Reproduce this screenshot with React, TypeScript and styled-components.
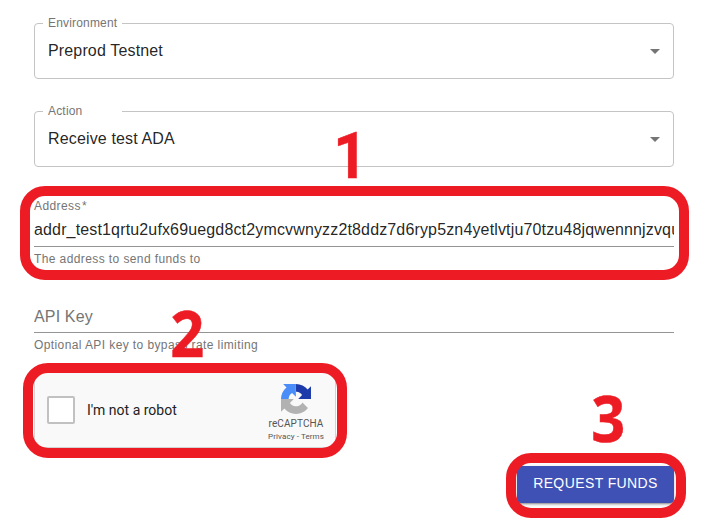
import React from "react";
import styled, { createGlobalStyle } from "styled-components";

const Global = createGlobalStyle`
  *, *::before, *::after { box-sizing: border-box; }
  body { margin: 0; background: #fff; overflow: hidden; }
`;

const Page = styled.main`
  position: relative;
  width: 713px;
  height: 524px;
  padding: 17px 39px 0 34px;
  overflow: hidden;
  font-family: "Liberation Sans", Arial, sans-serif;
  font-size: 16px;
  letter-spacing: 0.15px;
  color: rgba(0, 0, 0, 0.87);
`;

const Form = styled.form`
  display: flex;
  flex-direction: column;
`;

const Outlined = styled.fieldset`
  display: flex;
  flex-direction: column;
  height: 62px;
  min-width: 0;
  margin: 0 0 26px;
  padding: 0 13px 0 8px;
  border: 1px solid #c4c4c4;
  border-radius: 4px;
`;

const Legend = styled.legend`
  width: 79px;
  height: 12px;
  padding: 0 5px;
  font-size: 12px;
  line-height: 12px;
  letter-spacing: 0.18px;
  color: #757575;
`;

const SelectRow = styled.div`
  display: flex;
  align-items: center;
  justify-content: space-between;
  height: 43px;
  padding-left: 5px;
`;

const Arrow = styled.svg`
  width: 10px;
  height: 5px;
  margin-top: 2px;
  fill: #757575;
`;

const Field = styled.div<{ $gap: number }>`
  display: flex;
  flex-direction: column;
  margin-bottom: ${(p) => p.$gap}px;
`;

const FieldLabel = styled.label`
  height: 14px;
  margin-top: 6px;
  font-size: 12px;
  line-height: 14px;
  letter-spacing: 0.4px;
  word-spacing: -2.5px;
  color: #757575;
`;

const FieldValue = styled.div<{ $muted?: boolean }>`
  height: 34px;
  line-height: ${(p) => (p.$muted ? 35 : 33)}px;
  overflow: hidden;
  white-space: nowrap;
  color: ${(p) => (p.$muted ? "#757575" : "rgba(0,0,0,0.87)")};
  border-bottom: 1px solid #949494;
`;

const Helper = styled.p`
  margin: 2px 0 0;
  font-size: 12px;
  line-height: 20px;
  letter-spacing: 0.4px;
  color: #757575;
`;

const Captcha = styled.div`
  display: flex;
  align-items: center;
  width: 302px;
  height: 76px;
  padding: 0 10px 0 12px;
  background: #f9f9f9;
  border: 1px solid #d3d3d3;
  border-radius: 3px;
  font-family: Roboto, sans-serif;
  letter-spacing: 0;
`;

const Check = styled.span`
  width: 28px;
  height: 28px;
  margin-right: 12px;
  background: #fff;
  border: 2px solid #c1c1c1;
  border-radius: 2px;
`;

const CaptchaText = styled.span`
  flex: 1;
  font-size: 14px;
  line-height: 17px;
  color: #222;
`;

const Brand = styled.div`
  display: flex;
  flex-direction: column;
  align-items: center;
  width: 58px;
  padding-top: 6px;
  color: #555;
`;

const Logo = styled.svg`
  width: 30px;
  height: 30px;
`;

const BrandName = styled.span`
  margin-top: 4px;
  font-size: 10px;
  line-height: 12px;
  letter-spacing: 0.1px;
`;

const Legal = styled.span`
  margin-top: 1px;
  font-size: 8px;
  line-height: 11px;
  letter-spacing: 0.1px;
  white-space: nowrap;
`;

const Submit = styled.button`
  align-self: flex-end;
  width: 157px;
  height: 37px;
  margin-top: 18px;
  padding: 0 0 1px;
  border: 0;
  border-radius: 4px;
  background: #3f51b5;
  color: #fff;
  font: 14px/36px "Liberation Sans", Arial, sans-serif;
  letter-spacing: 0.4px;
  box-shadow: 0 3px 1px -2px rgba(0, 0, 0, 0.2), 0 2px 2px rgba(0, 0, 0, 0.14), 0 1px 5px rgba(0, 0, 0, 0.12);
`;

const ButtonText = styled.span`
  display: block;
  height: 36px;
  line-height: 34px;
`;

const Highlight = styled.div<{ $x: number; $y: number; $w: number; $h: number }>`
  position: absolute;
  left: ${(p) => p.$x}px;
  top: ${(p) => p.$y}px;
  width: ${(p) => p.$w}px;
  height: ${(p) => p.$h}px;
  border: 10px solid #ed1c24;
  border-radius: 25px;
  pointer-events: none;
`;

const Step = styled.span<{ $x: number; $y: number; $face?: string }>`
  position: absolute;
  left: ${(p) => p.$x}px;
  top: ${(p) => p.$y}px;
  font: 700 64px/64px ${(p) => p.$face ?? '"Open Sans"'}, sans-serif;
  letter-spacing: 0;
  color: #ed1c24;
  -webkit-text-stroke: 0.5px #ed1c24;
  transform: scaleX(0.93);
`;

function Select({ label, value }: { label: string; value: string }) {
  return (
    <Outlined>
      <Legend>{label}</Legend>
      <SelectRow>
        <span>{value}</span>
        <Arrow viewBox="0 0 10 5"><path d="M0 0h10L5 5z" /></Arrow>
      </SelectRow>
    </Outlined>
  );
}

export default function App() {
  return (
    <Page>
      <Global />
      <Form>
        <Select label="Environment" value="Preprod Testnet" />
        <Select label="Action" value="Receive test ADA" />
        <Field $gap={30}>
          <FieldLabel>Address *</FieldLabel>
          <FieldValue>addr_test1qrtu2ufx69uegd8ct2ymcvwnyzz2t8ddz7d6ryp5zn4yetlvtju70tzu48jqwennnjzvqu0d</FieldValue>
          <Helper>The address to send funds to</Helper>
        </Field>
        <Field $gap={17}>
          <FieldValue $muted>API Key</FieldValue>
          <Helper>Optional API key to bypass rate limiting</Helper>
        </Field>
        <Captcha>
          <Check />
          <CaptchaText>I'm not a robot</CaptchaText>
          <Brand>
            <Logo viewBox="0 0 64 64">
              <path fill="#1c3aa9" d="M64 31.955a33 33 0 0 0-.037-1.378V4.687l-7.157 7.157C50.948 4.674 42.033.093 32.05.093v16.254c.485 0 .86.057 1.135.163 4.976.393 9.288 3.14 11.828 7.124l-8.304 8.304c10.517-.04 22.4-.066 27.297.006" />
              <path fill="#4a8df8" d="M31.862.094a33 33 0 0 0-1.377.037H4.594l7.157 7.157C4.581 13.147 0 22.06 0 32.045h16.254c0-.485.057-.86.163-1.135.393-4.976 3.14-9.288 7.124-11.828l8.304 8.304c-.04-10.517-.066-22.4.017-27.297" />
              <path fill="#b2b2b2" d="M.001 32.045c.002.461.013.92.037 1.377v25.891l7.157-7.157c5.858 7.17 14.772 11.75 24.756 11.75 10.389 0 19.619-4.96 25.459-12.639l-11.732-11.854a15.55 15.55 0 0 1-4.753 5.334c-2.05 1.6-4.953 2.906-8.969 2.906-.485 0-.859-.057-1.135-.163-4.975-.393-9.288-3.14-11.827-7.124l8.304-8.304c-10.518.04-22.401.066-27.297-.017" />
            </Logo>
            <BrandName>reCAPTCHA</BrandName>
            <Legal>Privacy - Terms</Legal>
          </Brand>
        </Captcha>
        <Submit type="button"><ButtonText>REQUEST FUNDS</ButtonText></Submit>
      </Form>
      <Highlight $x={20} $y={186} $w={669} $h={94} />
      <Highlight $x={23} $y={363} $w={324} $h={95} />
      <Highlight $x={506} $y={453} $w={180} $h={65} />
      <Step $x={332} $y={125} $face="Roboto">1</Step>
      <Step $x={169} $y={301}>2</Step>
      <Step $x={590} $y={386}>3</Step>
    </Page>
  );
}
